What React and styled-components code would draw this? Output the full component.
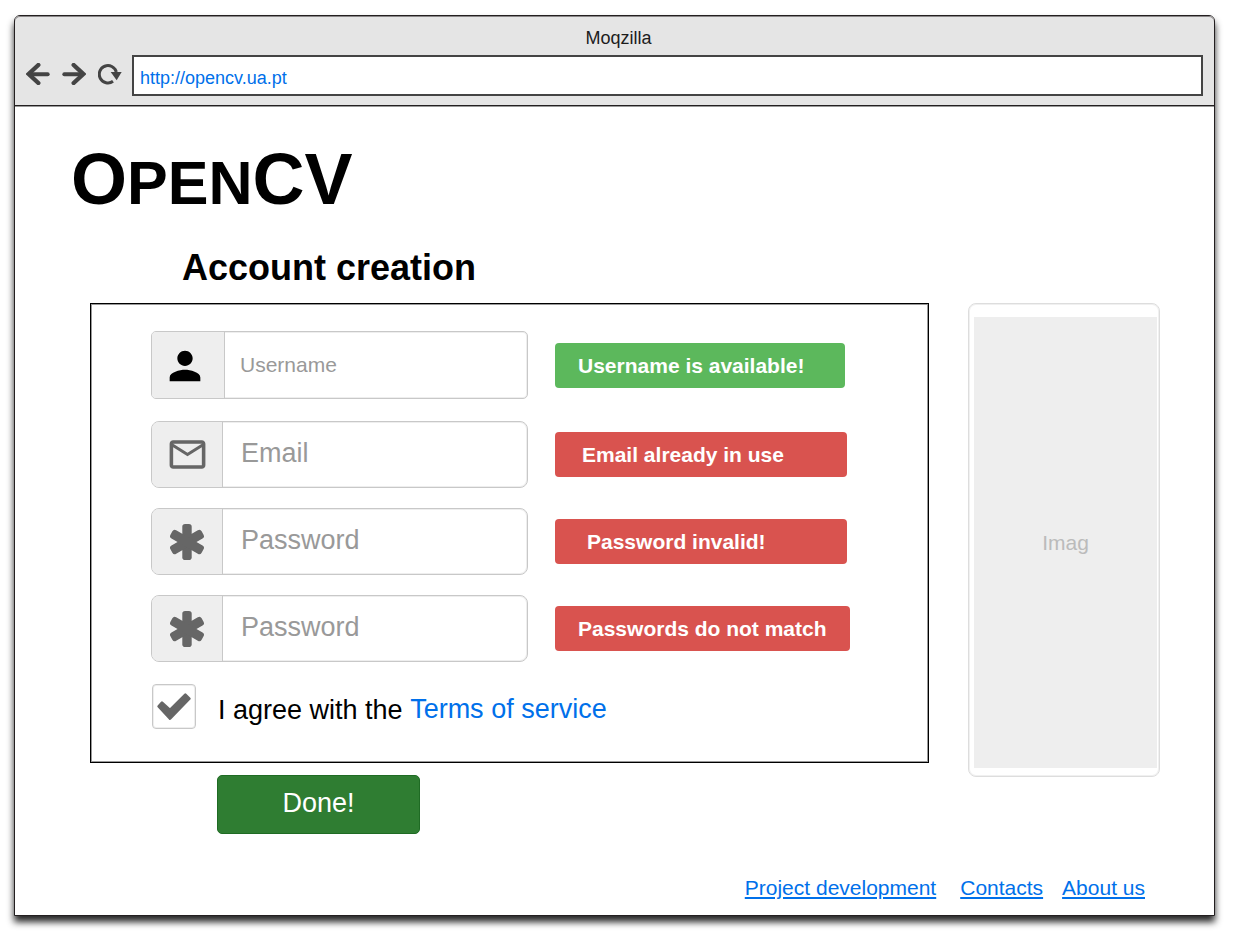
import React from "react";
import styled, { createGlobalStyle } from "styled-components";
import { MdPerson, MdMailOutline } from "react-icons/md";

const GlobalStyle = createGlobalStyle`
  *, *::before, *::after { box-sizing: border-box; }
  body {
    margin: 0;
    background: #fff;
    color: #000;
    font-family: "Liberation Sans", Arial, Helvetica, sans-serif;
  }
  a { color: #0070ea; }
`;

const BrowserWindow = styled.div`
  margin: 15px 28px 27px 14px;
  border: 1px solid #231f20;
  border-radius: 6px 6px 0 0;
  background: #fff;
  box-shadow: 0 6px 7px rgba(0, 0, 0, 0.85);
`;

const Chrome = styled.header`
  padding: 12px 11px 9px 11px;
  background: #e5e5e5;
  border-bottom: 1px solid #231f20;
  border-radius: 5px 5px 0 0;
  box-shadow: inset 0 1px #8a8788, 0 1px #9a9a9a;
`;

const WindowTitle = styled.div`
  margin-bottom: 6px;
  padding-left: 8px;
  color: #1c1c1c;
  font-size: 18px;
  line-height: 21px;
  text-align: center;
`;

const Toolbar = styled.div`
  display: flex;
  align-items: center;
`;

const NavButton = styled.button`
  display: flex;
  width: 24px;
  margin: 0 12px 0 0;
  padding: 0 0 3px;
  border: 0;
  background: none;
  color: #444;
  &:last-of-type { margin-right: 10px; }
`;

const AddressBar = styled.input`
  flex: 1;
  min-width: 0;
  height: 41px;
  padding: 5px 6px 0;
  border: 2px solid #444;
  border-radius: 0;
  background: #fff;
  color: #0070ea;
  font: 18px "Liberation Sans", Arial, sans-serif;
  outline: none;
`;

const Page = styled.main`
  padding: 33px 54px 0 75px;
`;

const Brand = styled.h1`
  margin: 0 0 29px -19px;
  font-size: 72px;
  line-height: 80px;
`;

const SmallCaps = styled.span`
  font-size: 61px;
  line-height: 1;
  text-transform: uppercase;
`;

const Heading = styled.h2`
  margin: 0 0 15px 92px;
  font-size: 36px;
  line-height: 40px;
`;

const Columns = styled.div`
  display: flex;
  align-items: flex-start;
  gap: 39px;
`;

const SignupForm = styled.form`
  flex: 1;
  min-width: 0;
`;

const Panel = styled.div`
  padding: 27px 61px 33px 60px;
  border: 1px solid #000;
  box-shadow: inset 0 0 0 1px #999;
`;

const FormRow = styled.div`
  display: flex;
  align-items: center;
  gap: 27px;
  margin-bottom: ${(p) => (p.$compact ? 22 : 20)}px;
`;

const Field = styled.label`
  display: flex;
  width: 377px;
  height: ${(p) => (p.$compact ? 68 : 67)}px;
  border: 1px solid #c8c8c8;
  border-radius: ${(p) => (p.$compact ? 5 : 8)}px;
  box-shadow: inset 0 0 0 1px #eee;
  overflow: hidden;
`;

const Addon = styled.span`
  display: flex;
  align-items: center;
  justify-content: center;
  flex: none;
  width: ${(p) => (p.$compact ? 73 : 71)}px;
  padding-right: ${(p) => (p.$compact ? 6 : 0)}px;
  padding-top: ${(p) => (p.$compact ? 2 : 0)}px;
  border-right: 1px solid #c8c8c8;
  background: #eee;
  color: ${(p) => (p.$compact ? "#000" : "#666")};
`;

const TextBox = styled.input`
  flex: 1;
  min-width: 0;
  padding: ${(p) => (p.$compact ? "0 15px" : "0 18px 3px")};
  border: 0;
  background: none;
  font: ${(p) => (p.$compact ? 21 : 27)}px "Liberation Sans", Arial, sans-serif;
  outline: none;
  &::placeholder { color: #999; opacity: 1; }
`;

const Badge = styled.output`
  width: ${(p) => p.$width}px;
  padding-left: ${(p) => p.$indent}px;
  border-radius: 4px;
  background: ${(p) => (p.$ok ? "#5cb85c" : "#d9534f")};
  color: #fff;
  font-size: 21px;
  font-weight: bold;
  line-height: 45px;
  white-space: nowrap;
`;

const Agreement = styled.div`
  display: flex;
  align-items: center;
  padding: 2px 0 0 1px;
  font-size: 27px;
  line-height: 32px;
`;

const Tick = styled.span`
  display: grid;
  place-items: center;
  margin-right: 22px;
  & > * { grid-area: 1 / 1; }
  & > svg { pointer-events: none; visibility: hidden; }
  & > input:checked + svg { visibility: visible; }
`;

const TickBox = styled.input`
  appearance: none;
  width: 44px;
  height: 45px;
  margin: 0;
  border: 1px solid #c8c8c8;
  border-radius: 4px;
  box-shadow: inset 0 0 0 1px #eee;
`;

const AgreeText = styled.label`
  padding-top: 6px;
  white-space: pre;
`;

const TermsLink = styled.a`
  padding-top: 4px;
  text-decoration: none;
`;

const DoneButton = styled.button`
  display: block;
  width: 203px;
  height: 59px;
  margin: 12px 0 0 127px;
  padding: 0 0 3px;
  border: 1px solid #1f6b24;
  border-radius: 5px;
  background: #2f7d32;
  color: #fff;
  font: 27px "Liberation Sans", Arial, sans-serif;
`;

const ImageCard = styled.aside`
  width: 192px;
  height: 474px;
  padding: 13px 2px 8px 5px;
  border: 1px solid #ddd;
  border-radius: 8px;
  box-shadow: inset 0 0 0 1px #f0f0f0;
`;

const ImagePlaceholder = styled.div`
  display: flex;
  align-items: center;
  justify-content: center;
  height: 100%;
  background: #eee;
  color: #bbb;
  font-size: 21px;
`;

const Footer = styled.footer`
  display: flex;
  justify-content: flex-end;
  gap: 19px;
  margin-top: 42px;
  padding: 0 15px 15px 0;
  font-size: 21px;
  line-height: 24px;
  a:first-child { margin-right: 5px; }
`;

const ArrowIcon = ({ forward }) => (
  <svg width="24" height="22" viewBox="0 0 72 66" fill="none" aria-hidden="true">
    <g transform={forward ? "translate(72 0) scale(-1 1)" : undefined} stroke="currentColor">
      <path d="M12 34H65" strokeWidth="12" strokeLinecap="round" />
      <path d="M37 6L8 33L37 60" strokeWidth="13" strokeLinecap="round" />
    </g>
  </svg>
);

const ReloadIcon = () => (
  <svg width="24" height="22" viewBox="0 0 72 66" fill="none" aria-hidden="true">
    <path d="M45 55A26 26 0 1 1 55 27" stroke="currentColor" strokeWidth="9" />
    <path d="M38 27H71L56 52Z" fill="currentColor" />
  </svg>
);

const AsteriskIcon = () => (
  <svg width="38" height="38" viewBox="-19 -19 38 38" fill="currentColor" aria-hidden="true">
    {[0, 60, 120].map((angle) => (
      <rect key={angle} x="-4.7" y="-18" width="9.4" height="36" rx="2.8" transform={`rotate(${angle})`} />
    ))}
  </svg>
);

const CheckIcon = () => (
  <svg width="34" height="28" viewBox="0 0 102 84" aria-hidden="true">
    <path
      d="M5 40L15 29L39 51L85 5L97 17L39 77Z"
      fill="#666"
      stroke="#666"
      strokeWidth="8"
      strokeLinejoin="round"
    />
  </svg>
);

const fields = [
  { id: "username", type: "text", hint: "Username", icon: <MdPerson size={46} />, compact: true, ok: true, message: "Username is available!", width: 290, indent: 23 },
  { id: "email", type: "email", hint: "Email", icon: <MdMailOutline size={43} />, message: "Email already in use", width: 292, indent: 27 },
  { id: "password", type: "password", hint: "Password", icon: <AsteriskIcon />, message: "Password invalid!", width: 292, indent: 32 },
  { id: "confirm", type: "password", hint: "Password", icon: <AsteriskIcon />, message: "Passwords do not match", width: 295, indent: 23 },
];

export default function App() {
  return (
    <>
      <GlobalStyle />
      <BrowserWindow>
        <Chrome>
          <WindowTitle>Moqzilla</WindowTitle>
          <Toolbar>
            <NavButton type="button" aria-label="Back"><ArrowIcon /></NavButton>
            <NavButton type="button" aria-label="Forward"><ArrowIcon forward /></NavButton>
            <NavButton type="button" aria-label="Reload"><ReloadIcon /></NavButton>
            <AddressBar type="text" aria-label="Address" defaultValue="http://opencv.ua.pt" />
          </Toolbar>
        </Chrome>
        <Page>
          <Brand>O<SmallCaps>pen</SmallCaps>CV</Brand>
          <Heading>Account creation</Heading>
          <Columns>
            <SignupForm onSubmit={(e) => e.preventDefault()}>
              <Panel>
                {fields.map((f) => (
                  <FormRow key={f.id} $compact={f.compact}>
                    <Field htmlFor={f.id} $compact={f.compact}>
                      <Addon $compact={f.compact}>{f.icon}</Addon>
                      <TextBox id={f.id} type={f.type} placeholder={f.hint} aria-label={f.hint} $compact={f.compact} />
                    </Field>
                    <Badge htmlFor={f.id} $ok={f.ok} $width={f.width} $indent={f.indent}>{f.message}</Badge>
                  </FormRow>
                ))}
                <Agreement>
                  <Tick>
                    <TickBox id="agree" type="checkbox" defaultChecked />
                    <CheckIcon />
                  </Tick>
                  <AgreeText htmlFor="agree">{"I agree with the "}</AgreeText>
                  <TermsLink href="#terms">Terms of service</TermsLink>
                </Agreement>
              </Panel>
              <DoneButton type="submit">Done!</DoneButton>
            </SignupForm>
            <ImageCard>
              <ImagePlaceholder>Imag</ImagePlaceholder>
            </ImageCard>
          </Columns>
          <Footer>
            <a href="#project">Project development</a>
            <a href="#contacts">Contacts</a>
            <a href="#about">About us</a>
          </Footer>
        </Page>
      </BrowserWindow>
    </>
  );
}
